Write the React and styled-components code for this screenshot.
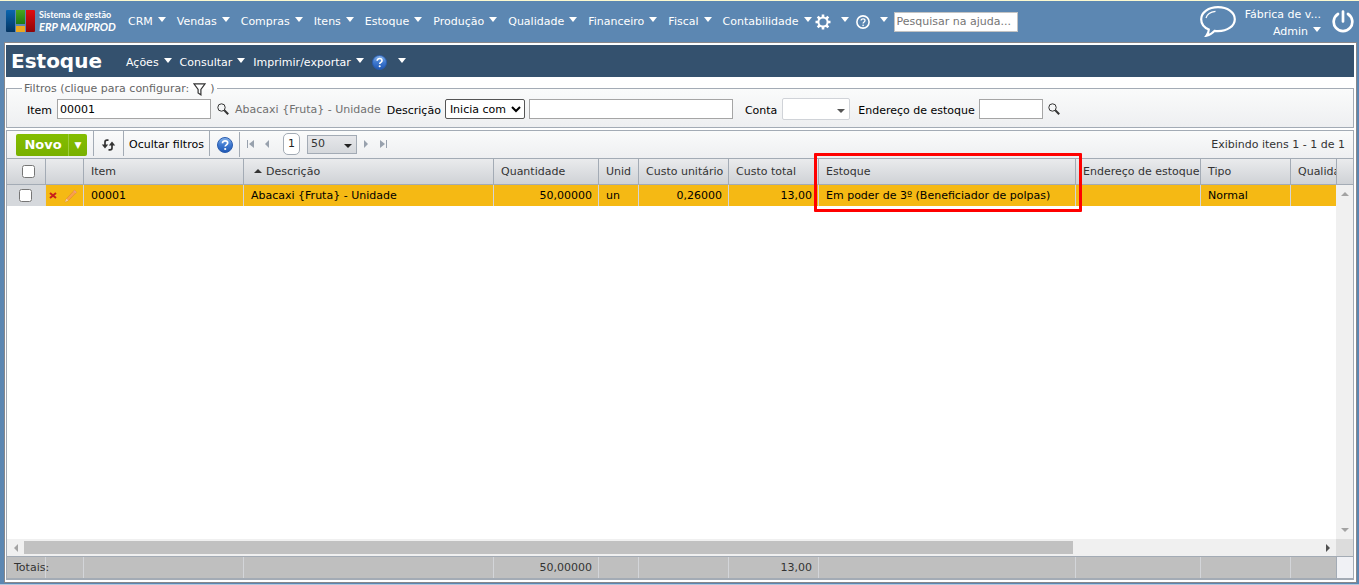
import React from "react";
import styled, { createGlobalStyle, css } from "styled-components";

const line = "#a3abb5";

const GlobalStyle = createGlobalStyle`
  * { box-sizing: border-box; }
  body {
    margin: 0;
    background: #5c87b2;
    font: 11px/14px Verdana, "DejaVu Sans", sans-serif;
    color: #000;
  }
  button, input, select { font: inherit; }
`;

const Page = styled.div`
  display: flex;
  flex-direction: column;
  min-height: 100vh;
  border-bottom: 1px solid #b4c8dc;
`;

const TopBar = styled.header`
  display: flex;
  align-items: center;
  height: 42px;
  padding: 0 5px 0 6px;
  border-top: 1px solid #fbf8cf;
  color: #fff;
`;

const Logo = styled.a`
  display: flex;
  align-items: center;
  gap: 4px;
  width: 122px;
  flex: none;
  padding-bottom: 2px;
  color: #fff;
  text-decoration: none;
  font: bold 9px/12px Lato, sans-serif;
  white-space: nowrap;
`;

const Brand = styled.em`
  display: block;
  font-size: 11px;
`;

const Menu = styled.nav`
  display: flex;
  align-items: center;
  gap: ${(p) => p.$gap}px;
  white-space: nowrap;
`;

const ToolMenu = styled(Menu)`
  margin: 0 6px 0 3px;
`;

const PageMenu = styled(Menu)`
  padding-top: 3px;
`;

const MenuButton = styled.button`
  display: flex;
  align-items: center;
  gap: ${(p) => p.$gap || 5}px;
  padding: 0;
  border: 0;
  background: none;
  color: #fff;
  &::after {
    content: "";
    border: 4px solid transparent;
    border-top: 5px solid #fff;
    border-bottom: 0;
    margin-bottom: 4px;
  }
`;

const HelpSearch = styled.input`
  width: 124px;
  height: 20px;
  padding: 0 2px;
  border: 1px solid #c3c3c3;
  background: #fff;
  &::placeholder { color: #757575; }
`;

const UserArea = styled.div`
  display: flex;
  align-items: center;
  gap: 9px;
  margin-left: auto;
`;

const User = styled.div`
  display: flex;
  flex-direction: column;
  align-items: flex-end;
  gap: 2px;
  margin-right: 2px;
  padding-top: 2px;
  line-height: 15px;
  white-space: nowrap;
`;

const IconButton = styled.button`
  display: flex;
  align-items: center;
  justify-content: center;
  flex: none;
  width: ${(p) => p.$w || 16}px;
  height: ${(p) => p.$h || 16}px;
  padding: 0;
  border: 0;
  background: none;
  color: inherit;
  svg { flex: none; }
`;

const Frame = styled.main`
  flex: 1;
  display: flex;
  flex-direction: column;
  margin: 0 2px 1px 4px;
  padding: 0 2px 2px 1px;
  border: 1px solid #87878b;
  background: #fff;
`;

const TitleBar = styled.div`
  display: flex;
  align-items: center;
  height: 32px;
  margin-top: 2px;
  padding-left: 5px;
  background: #34516e;
  color: #fff;
`;

const Title = styled.h1`
  width: 115px;
  margin: 0;
  font-size: 20px;
  line-height: 28px;
`;

const Filters = styled.fieldset`
  min-width: 0;
  margin: 3px 0 2px;
  padding: 3px 20px 8px;
  border: 1px solid ${line};
  background: linear-gradient(#fafbfb, #eeeff1);
`;

const Legend = styled.legend`
  display: flex;
  align-items: center;
  gap: 4px;
  margin-left: -5px;
  padding: 2px 2px 0;
  height: 16px;
  color: #666;
`;

const FilterRow = styled.div`
  display: flex;
  align-items: center;
  height: 20px;
  white-space: nowrap;
`;

const Field = styled.div`
  display: flex;
  align-items: center;
  gap: ${(p) => p.$gap || 5}px;
  margin-right: ${(p) => p.$after || 0}px;
  label { padding-top: 3px; }
`;

const TextBox = styled.input`
  width: ${(p) => p.$w}px;
  height: 20px;
  padding: 0 2px;
  border: 1px solid #a5a5a5;
  background: #fff;
`;

const Muted = styled.span`
  padding-top: 2px;
  color: #707070;
`;

const NativeSelect = styled.select`
  width: 80px;
  height: 20px;
  padding: 0;
  border: 1px solid #555;
  border-radius: 2px;
  background: #fff;
  color: #000;
`;

const Combo = styled.div`
  position: relative;
  width: ${(p) => p.$w}px;
  height: ${(p) => p.$h}px;
  &::after {
    content: "";
    position: absolute;
    right: 5px;
    top: 50%;
    border: 4px solid transparent;
    border-top-color: ${(p) => (p.$flat ? "#222" : "#555")};
    border-bottom: 0;
    pointer-events: none;
  }
  select {
    appearance: none;
    display: block;
    width: 100%;
    height: 100%;
    padding: 0 3px;
    border: 1px solid ${(p) => (p.$flat ? line : "#d0d3d8")};
    border-radius: ${(p) => (p.$flat ? 0 : 2)}px;
    background: ${(p) => (p.$flat ? "linear-gradient(#e6e7ea, #d5d8dc)" : "#fff")};
    color: #333;
  }
`;

const Grid = styled.section`
  position: relative;
  flex: 1;
  display: flex;
  flex-direction: column;
  border: 1px solid ${line};
  border-bottom-width: 2px;
  color: #333;
`;

const Toolbar = styled.div`
  display: flex;
  align-items: center;
  height: 27px;
  padding: 0 8px 0 9px;
  background: linear-gradient(#fafbfb, #eeeff1);
  white-space: nowrap;
`;

const ToolGroup = styled.div`
  display: flex;
  align-items: center;
  justify-content: center;
  width: ${(p) => p.$w}px;
  height: 25px;
  margin-bottom: 2px;
  padding-top: 2px;
  border-left: 1px solid ${line};
`;

const NewButton = styled.div`
  display: flex;
  height: 22px;
  margin: 1px 6px 0 0;
  border-radius: 2px;
  overflow: hidden;
  button {
    width: 52px;
    padding: 0 0 0 2px;
    border: 0;
    background: linear-gradient(#84be00, #79b000);
    color: #fff;
    font-size: 13px;
    font-weight: bold;
  }
  button + button {
    width: 19px;
    padding: 0;
    border-left: 1px solid #9ccc3c;
    font-size: 9px;
  }
`;

const PlainButton = styled.button`
  padding: 0;
  border: 0;
  background: none;
  color: #000;
`;

const Pager = styled.nav`
  display: flex;
  align-items: center;
  height: 25px;
  padding-left: 1px;
  margin-bottom: 1px;
  border-left: 1px solid ${line};
  color: #98a1ad;
`;

const PageNumber = styled.button`
  width: 17px;
  height: 22px;
  margin: 0 7px;
  padding: 0;
  border: 1px solid ${line};
  border-radius: 5px;
  background: #fff;
  color: #222;
`;

const Status = styled.output`
  margin-left: auto;
`;

const Band = styled.div`
  display: flex;
  flex: none;
  min-width: 0;
  ${(p) =>
    p.$head &&
    css`
      border-top: 1px solid ${line};
      border-bottom: 1px solid ${line};
      background: linear-gradient(#eaebed, #cfd2d6);
    `}
  ${(p) =>
    p.$foot &&
    css`
      border-top: 1px solid ${line};
      background: #bfbfbf;
    `}
`;

const Clip = styled.div`
  flex: 1;
  min-width: 0;
  overflow: hidden;
`;

const Gutter = styled.div`
  flex: none;
  width: 17px;
  border-left: 1px solid ${line};
  background: ${(p) => p.$fill || "none"};
`;

const Table = styled.table`
  width: 100%;
  table-layout: fixed;
  border-collapse: separate;
  border-spacing: 0;
`;

const Cell = styled.td`
  height: ${(p) => p.$h}px;
  padding: 0 6px 0 7px;
  border-right: 1px solid ${(p) => p.$rule || "#d3d5d9"};
  font-weight: normal;
  text-align: ${(p) => (p.$right ? "right" : "left")};
  white-space: nowrap;
  overflow: ${(p) => (p.$spill ? "visible" : "hidden")};
  &:last-child { border-right: 0; }
`;

const HeadCell = styled(Cell)`
  padding-right: 0;
`;

const BodyCell = styled(Cell)`
  background: #f5b914;
  color: #000;
`;

const CheckCell = styled(Cell)`
  padding: 0 0 0 ${(p) => p.$pad}px;
  background: ${(p) => p.$fill || "none"};
  input { display: block; width: 13px; height: 13px; margin: 0; }
`;

const Actions = styled.div`
  display: flex;
  align-items: center;
  gap: 2px;
  margin-left: -7px;
`;

const SortMark = styled.span`
  display: inline-block;
  margin: 0 4px 2px 3px;
  border: 4px solid transparent;
  border-top: 0;
  border-bottom-color: #333;
`;

const Body = styled.div`
  flex: 1;
  display: flex;
  min-height: 120px;
  background: #fff;
`;

const VScroll = styled.div`
  display: flex;
  flex-direction: column;
  align-items: center;
  justify-content: space-between;
  flex: none;
  width: 17px;
  padding: 5px 0;
  background: #f0f0f0;
  color: #a3a3a3;
`;

const HScroll = styled.div`
  display: flex;
  align-items: center;
  flex: 1;
  height: 17px;
  background: #f0f0f0;
`;

const Track = styled.div`
  flex: 1;
  height: 13px;
`;

const Thumb = styled.div`
  width: 81%;
  height: 100%;
  background: #c1c1c1;
`;

const Corner = styled.div`
  width: 17px;
  height: 17px;
  background: #dcdcdc;
`;

const Highlight = styled.div`
  position: absolute;
  left: 807px;
  top: 22px;
  width: 268px;
  height: 59px;
  border: 3px solid #f00;
  border-radius: 1px;
  pointer-events: none;
`;

const LogoMark = () => (
  <svg width="29" height="22" viewBox="0 0 29 22" aria-hidden="true">
    <defs>
      <linearGradient id="lb" x2="0" y2="1"><stop stopColor="#0a66b0" /><stop offset="1" stopColor="#043461" /></linearGradient>
      <linearGradient id="lg" x2="0" y2="1"><stop stopColor="#4aa520" /><stop offset="1" stopColor="#1f7a12" /></linearGradient>
      <linearGradient id="lr" x2="0" y2="1"><stop stopColor="#e00d10" /><stop offset="1" stopColor="#8e0508" /></linearGradient>
    </defs>
    <path d="M0 1q0-1 1-1h8v22H1q-1 0-1-1z" fill="url(#lb)" />
    <path d="M10 0h9v14h-9z" fill="url(#lg)" />
    <path d="M10 16h9v6h-9z" fill="#eaa821" />
    <path d="M20 0h8q1 0 1 1v20q0 1-1 1h-8z" fill="url(#lr)" />
  </svg>
);

const Gear = () => (
  <svg width="16" height="16" viewBox="0 0 16 16" aria-hidden="true" fill="none" stroke="#fff">
    <circle cx="8" cy="8" r="4.600" strokeWidth="2" />
    <path
      strokeWidth="2.600"
      d="M8 .5v2.600M8 12.900v2.600M.5 8h2.600M12.900 8h2.600M2.700 2.700l1.800 1.800M11.500 11.500l1.800 1.800M2.700 13.300l1.800-1.800M11.500 4.500l1.800-1.800"
    />
  </svg>
);

const HelpRing = () => (
  <svg width="14" height="14" viewBox="0 0 14 14" aria-hidden="true" fill="none" stroke="#fff">
    <circle cx="7" cy="7" r="6.100" strokeWidth="1.600" />
    <path d="M5.100 5.600c0-2.400 3.900-2.300 3.900 0C9 7 7.100 7 7.100 8.600" strokeWidth="1.300" />
    <circle cx="7.100" cy="10.400" r=".8" fill="#fff" stroke="none" />
  </svg>
);

const HelpBall = ({ size, id }) => (
  <svg width={size} height={size} viewBox="0 0 16 16" aria-hidden="true">
    <defs>
      <linearGradient id={id} x2="0" y2="1"><stop stopColor="#86b4ec" /><stop offset=".5" stopColor="#3e78cf" /><stop offset="1" stopColor="#1f58b4" /></linearGradient>
    </defs>
    <circle cx="8" cy="8" r="7.500" fill={`url(#${id})`} stroke="#2a5cae" />
    <path d="M5.500 6.200c0-3.300 5.200-3.100 5.200-.1C10.700 7.900 8.200 7.800 8.200 9.600" fill="none" stroke="#fff" strokeWidth="1.700" />
    <circle cx="8.200" cy="12" r="1.100" fill="#fff" />
  </svg>
);

const Bubble = () => (
  <svg width="36" height="31" viewBox="0 0 36 31" aria-hidden="true" fill="none" stroke="#fff">
    <path d="M18 1.200C8.500 1.200 1.200 6.500 1.200 13.200c0 4.600 3 8.300 7.600 10.300-.1 2.500-.9 4.400-2.300 6.200 3.400-.7 6-2.400 8-4.800 1.200.2 2.300.3 3.500.3 9.500 0 16.800-5.300 16.800-12S27.500 1.200 18 1.200z" strokeWidth="2.200" />
    <path d="M6 12c1-3.600 4.500-6 9.500-6.600" strokeWidth="1.200" />
  </svg>
);

const Power = () => (
  <svg width="22" height="24" viewBox="0 0 22 24" aria-hidden="true" fill="none" stroke="#fff" strokeWidth="2.700" strokeLinecap="round">
    <path d="M11 1.500v10M6 4a9.300 9.300 0 1 0 10 0" />
  </svg>
);

const Funnel = () => (
  <svg width="13" height="13" viewBox="0 0 13 13" aria-hidden="true" fill="none" stroke="#333" strokeWidth="1.200">
    <path d="M.9.8h11.200L7.900 6.400v5.400L5.100 10V6.400z" />
  </svg>
);

const Lens = () => (
  <svg width="12" height="12" viewBox="0 0 12 12" aria-hidden="true" fill="none" stroke="#333">
    <circle cx="4.500" cy="4.500" r="3.700" strokeWidth="1" />
    <path d="M7.300 7.300l3.900 3.900" strokeWidth="2" />
  </svg>
);

const Refresh = () => (
  <svg width="15" height="12" viewBox="0 0 15 12" aria-hidden="true" fill="none" stroke="#333" strokeWidth="1.700">
    <path d="M7.500 1.200H6Q4 1.200 4 3v5M7.500 10.800H9q2 0 2-1.800V4" />
    <path d="M.8 5.500h6.400L4 9.500z M7.800 6.500h6.400L11 2.500z" fill="#333" stroke="none" />
  </svg>
);

const Step = ({ end, back }) => (
  <svg width="8" height="8" viewBox="0 0 8 8" aria-hidden="true" fill="currentColor">
    <g transform={back ? "rotate(180 4 4)" : undefined}>
      <path d={end ? "M0 0l5 4-5 4zM6 0h1v8H6z" : "M2 0l4 4-4 4z"} />
    </g>
  </svg>
);

const Arrow = ({ turn, color }) => (
  <svg width="8" height="8" viewBox="0 0 8 8" aria-hidden="true">
    <path d="M0 6l4-4 4 4z" fill={color} transform={`rotate(${turn} 4 4)`} />
  </svg>
);

const Cross = () => (
  <svg width="8" height="7" viewBox="0 0 8 7" aria-hidden="true">
    <path d="M1 1l6 5M7 1L1 6" stroke="#c8201c" strokeWidth="2" />
  </svg>
);

const Pencil = () => (
  <svg width="14" height="14" viewBox="0 0 14 14" aria-hidden="true">
    <path d="M1 13l1.400-3.200 8-8.600 2.200 2-8.200 8.400z" fill="#f9a04a" stroke="#d9822b" strokeWidth=".5" />
    <path d="M10.400 1.200l2.200 2-1 1-2.200-2z" fill="#ef9c84" />
    <path d="M1 13l1.400-3.200 2 1.800z" fill="#f0d3a0" />
  </svg>
);

const modules = ["CRM", "Vendas", "Compras", "Itens", "Estoque", "Produção", "Qualidade", "Financeiro", "Fiscal", "Contabilidade"];

const columns = [
  { w: 39 },
  { w: 38 },
  { w: 160, label: "Item", value: "00001" },
  { w: 250, label: "Descrição", value: "Abacaxi {Fruta} - Unidade", sorted: true },
  { w: 105, label: "Quantidade", value: "50,00000", total: "50,00000", right: true },
  { w: 40, label: "Unid", value: "un" },
  { w: 90, label: "Custo unitário", value: "0,26000", right: true },
  { w: 90, label: "Custo total", value: "13,00", total: "13,00", right: true },
  { w: 257, label: "Estoque", value: "Em poder de 3º (Beneficiador de polpas)" },
  { w: 125, label: "Endereço de estoque", value: "" },
  { w: 90, label: "Tipo", value: "Normal" },
  { label: "Qualidade", value: "" },
];

const dataColumns = columns.slice(2);

const Columns = () => (
  <colgroup>
    {columns.map((c, i) => (
      <col key={i} width={c.w} />
    ))}
  </colgroup>
);

export default function App() {
  return (
    <Page>
      <GlobalStyle />
      <TopBar>
        <Logo href="#">
          <LogoMark />
          <span>
            Sistema de gestão
            <Brand>ERP MAXIPROD</Brand>
          </span>
        </Logo>
        <Menu $gap={11}>
          {modules.map((m) => (
            <MenuButton key={m}>{m}</MenuButton>
          ))}
        </Menu>
        <ToolMenu $gap={7}>
          <MenuButton $gap={10} aria-label="Configurações"><Gear /></MenuButton>
          <MenuButton $gap={10} aria-label="Ajuda"><HelpRing /></MenuButton>
        </ToolMenu>
        <HelpSearch aria-label="Pesquisar na ajuda" placeholder="Pesquisar na ajuda..." />
        <UserArea>
          <IconButton $w={36} $h={31} aria-label="Mensagens"><Bubble /></IconButton>
          <User>
            <span>Fábrica de v...</span>
            <MenuButton>Admin</MenuButton>
          </User>
          <IconButton $w={22} $h={24} aria-label="Sair"><Power /></IconButton>
        </UserArea>
      </TopBar>

      <Frame>
        <TitleBar>
          <Title>Estoque</Title>
          <PageMenu $gap={8}>
            <MenuButton>Ações</MenuButton>
            <MenuButton>Consultar</MenuButton>
            <MenuButton>Imprimir/exportar</MenuButton>
            <MenuButton $gap={11} aria-label="Ajuda"><HelpBall size={15} id="h1" /></MenuButton>
          </PageMenu>
        </TitleBar>

        <Filters>
          <Legend>
            Filtros (clique para configurar: <Funnel /> )
          </Legend>
          <FilterRow>
            <Field $after={6}>
              <label htmlFor="item">Item</label>
              <TextBox id="item" $w={154} defaultValue="00001" />
              <IconButton $w={14} aria-label="Buscar item"><Lens /></IconButton>
              <Muted>Abacaxi {"{Fruta}"} - Unidade</Muted>
            </Field>
            <Field $gap={4} $after={12}>
              <label htmlFor="descMode">Descrição</label>
              <NativeSelect id="descMode"><option>Inicia com</option></NativeSelect>
              <TextBox aria-label="Descrição" $w={204} />
            </Field>
            <Field $after={8}>
              <label htmlFor="conta">Conta</label>
              <Combo $w={68} $h={22}><select id="conta"><option> </option></select></Combo>
            </Field>
            <Field $gap={4}>
              <label htmlFor="endereco">Endereço de estoque</label>
              <TextBox id="endereco" $w={64} />
              <IconButton $w={14} aria-label="Buscar endereço"><Lens /></IconButton>
            </Field>
          </FilterRow>
        </Filters>

        <Grid>
          <Toolbar>
            <NewButton>
              <button>Novo</button>
              <button aria-label="Mais opções">▼</button>
            </NewButton>
            <ToolGroup $w={30}><IconButton aria-label="Atualizar"><Refresh /></IconButton></ToolGroup>
            <ToolGroup $w={86}><PlainButton>Ocultar filtros</PlainButton></ToolGroup>
            <ToolGroup $w={30}><IconButton aria-label="Ajuda"><HelpBall size={16} id="h2" /></IconButton></ToolGroup>
            <Pager>
              <IconButton $w={17} aria-label="Primeira página"><Step end back /></IconButton>
              <IconButton $w={18} aria-label="Página anterior"><Step back /></IconButton>
              <PageNumber>1</PageNumber>
              <Combo $w={50} $h={19} $flat>
                <select aria-label="Itens por página"><option>50</option></select>
              </Combo>
              <IconButton $w={18} aria-label="Próxima página"><Step /></IconButton>
              <IconButton $w={18} aria-label="Última página"><Step end /></IconButton>
            </Pager>
            <Status>Exibindo itens 1 - 1 de 1</Status>
          </Toolbar>

          <Band $head>
            <Clip>
              <Table>
                <Columns />
                <thead>
                  <tr>
                    <CheckCell as="th" $h={25} $pad={15} $rule={line}>
                      <input type="checkbox" aria-label="Selecionar todos" />
                    </CheckCell>
                    <HeadCell as="th" $h={25} $rule={line} />
                    {dataColumns.map((c) => (
                      <HeadCell as="th" $h={25} $rule={line} key={c.label}>
                        {c.sorted && <SortMark />}
                        {c.label}
                      </HeadCell>
                    ))}
                  </tr>
                </thead>
              </Table>
            </Clip>
            <Gutter />
          </Band>

          <Body>
            <Clip>
              <Table>
                <Columns />
                <tbody>
                  <tr>
                    <CheckCell $h={21} $pad={12} $fill="#d5d8dc">
                      <input type="checkbox" aria-label="Selecionar 00001" />
                    </CheckCell>
                    <BodyCell $h={21}>
                      <Actions>
                        <IconButton $w={14} aria-label="Excluir"><Cross /></IconButton>
                        <IconButton $w={18} aria-label="Editar"><Pencil /></IconButton>
                      </Actions>
                    </BodyCell>
                    {dataColumns.map((c) => (
                      <BodyCell $h={21} $right={c.right} key={c.label}>{c.value}</BodyCell>
                    ))}
                  </tr>
                </tbody>
              </Table>
            </Clip>
            <VScroll>
              <Arrow turn={0} color="#a3a3a3" />
              <Arrow turn={180} color="#a3a3a3" />
            </VScroll>
          </Body>

          <Band>
            <HScroll>
              <IconButton $w={17} aria-label="Rolar à esquerda"><Arrow turn={270} color="#a3a3a3" /></IconButton>
              <Track><Thumb /></Track>
              <IconButton $w={17} aria-label="Rolar à direita"><Arrow turn={90} color="#505050" /></IconButton>
            </HScroll>
            <Corner />
          </Band>

          <Band $foot>
            <Clip>
              <Table>
                <Columns />
                <tfoot>
                  <tr>
                    <Cell $h={21} $spill>Totais:</Cell>
                    <Cell $h={21} />
                    {dataColumns.map((c) => (
                      <Cell $h={21} $right={c.right} key={c.label}>{c.total}</Cell>
                    ))}
                  </tr>
                </tfoot>
              </Table>
            </Clip>
            <Gutter $fill="#f0f1f5" />
          </Band>
          <Highlight />
        </Grid>
      </Frame>
    </Page>
  );
}
